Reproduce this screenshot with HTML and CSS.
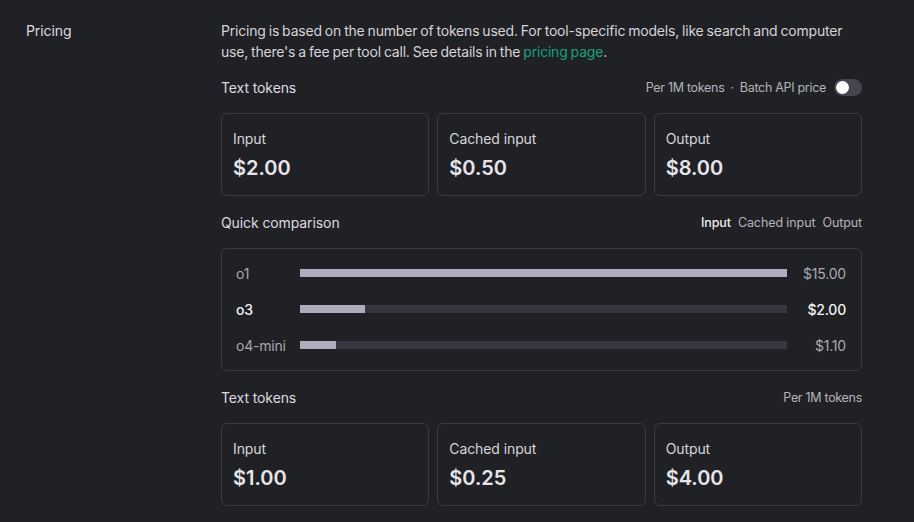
FILE: index.html
```html
<!DOCTYPE html>
<html>
<head>
<meta charset="utf-8">
<link rel="stylesheet" href="styles.css">
</head>
<body>
<div class="page">
  <div class="side-label">Pricing</div>
  <div class="content">
    <p class="desc">Pricing is based on the number of tokens used. For tool-specific models, like search and computer use, there's a fee per tool call. See details in the <a class="link" href="#">pricing page</a>.</p>

    <div class="head">
      <span class="head-title">Text tokens</span>
      <span class="head-meta">Per 1M tokens<span class="dot">·</span>Batch API price<span class="toggle"><span class="knob"></span></span></span>
    </div>
    <div class="cards">
      <div class="card"><div class="card-label">Input</div><div class="card-value">$2.00</div></div>
      <div class="card"><div class="card-label">Cached input</div><div class="card-value">$0.50</div></div>
      <div class="card"><div class="card-label">Output</div><div class="card-value">$8.00</div></div>
    </div>

    <div class="head">
      <span class="head-title">Quick comparison</span>
      <span class="tabs"><span class="tab active">Input</span><span class="tab">Cached input</span><span class="tab">Output</span></span>
    </div>
    <div class="compare">
      <div class="row"><span class="model">o1</span><span class="track"><span class="fill" style="width:100%"></span></span><span class="price">$15.00</span></div>
      <div class="row current"><span class="model">o3</span><span class="track"><span class="fill" style="width:13.4%"></span></span><span class="price">$2.00</span></div>
      <div class="row"><span class="model">o4-mini</span><span class="track"><span class="fill" style="width:7.4%"></span></span><span class="price">$1.10</span></div>
    </div>

    <div class="head">
      <span class="head-title">Text tokens</span>
      <span class="head-meta">Per 1M tokens</span>
    </div>
    <div class="cards">
      <div class="card"><div class="card-label">Input</div><div class="card-value">$1.00</div></div>
      <div class="card"><div class="card-label">Cached input</div><div class="card-value">$0.25</div></div>
      <div class="card"><div class="card-label">Output</div><div class="card-value">$4.00</div></div>
    </div>
  </div>
</div>
</body>
</html>
```

FILE: styles.css
```css
* { box-sizing: border-box; }
html, body { margin: 0; padding: 0; }
body {
  background: #202124;
  color: #d9d9de;
  font-family: Inter, "Noto Sans", sans-serif;
  font-size: 14px;
  height: 522px;
  overflow: hidden;
}
.page {
  display: grid;
  grid-template-columns: 195px 641px;
  padding: 20px 0 0 26px;
}
.side-label {
  line-height: 21px;
  color: #dcdce0;
  letter-spacing: -0.1px;
}
.content {
  display: flex;
  flex-direction: column;
  gap: 16px;
}
.desc {
  margin: 0 0 -1px 0;
  line-height: 21px;
  color: #d4d4d9;
  letter-spacing: -0.2px;
  word-spacing: -0.7px;
}
.link { color: #10a37f; text-decoration: none; }
.head {
  height: 20px;
  display: flex;
  align-items: center;
  justify-content: space-between;
}
.head-title { color: #dcdce0; letter-spacing: -0.1px; }
.head-meta {
  display: flex;
  align-items: center;
  font-size: 12.5px;
  color: #b4b4bc;
  letter-spacing: -0.3px;
}
.dot { margin: 0 6px; }
.toggle {
  width: 28px;
  height: 17px;
  border-radius: 9px;
  background: #45464d;
  margin-left: 8px;
  display: flex;
  align-items: center;
  padding-left: 2px;
}
.knob {
  width: 13px;
  height: 13px;
  border-radius: 50%;
  background: #ffffff;
}
.cards {
  display: grid;
  grid-template-columns: 1fr 1fr 1fr;
  gap: 8px;
}
.card {
  height: 83px;
  border: 1px solid #3a3b41;
  border-radius: 6px;
  padding: 15px 11px 13px;
  display: flex;
  flex-direction: column;
  gap: 5px;
}
.card-label { line-height: 20px; color: #d6d6db; letter-spacing: -0.1px; }
.card-value {
  font-size: 20px;
  line-height: 28px;
  font-weight: 600;
  color: #e6e6ea;
}
.tabs {
  display: flex;
  gap: 7px;
  font-size: 12.5px;
  color: #b4b4bc;
  letter-spacing: -0.1px;
}
.tab.active { color: #ececf0; font-weight: 500; }
.compare {
  border: 1px solid #3a3b41;
  border-radius: 6px;
  padding: 14px 15px 15px 14px;
  display: flex;
  flex-direction: column;
  gap: 16px;
}
.row {
  height: 20px;
  display: grid;
  grid-template-columns: 64px 1fr 59px;
  align-items: center;
  color: #a9a9b2;
  letter-spacing: -0.2px;
}
.row.current { color: #f2f2f5; font-weight: 500; }
.track {
  height: 8px;
  background: #363740;
  display: flex;
}
.fill { height: 8px; background: #aeadc0; }
.price { text-align: right; }
```
